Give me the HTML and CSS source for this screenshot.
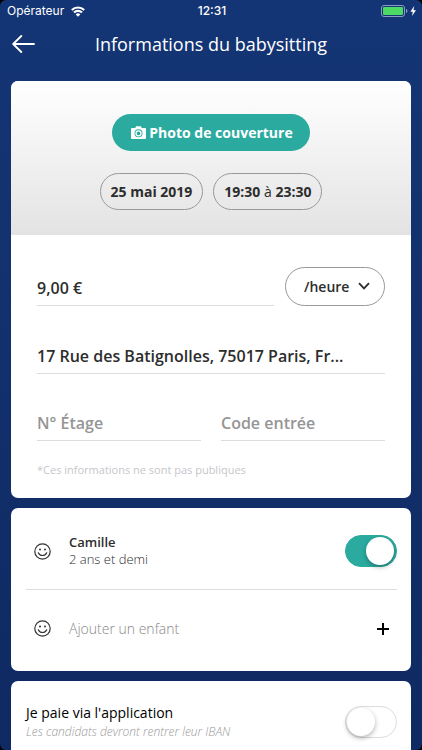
FILE: index.html
```html
<!DOCTYPE html>
<html lang="fr">
<head>
<meta charset="utf-8">
<meta name="viewport" content="width=device-width, initial-scale=1">
<title>Informations du babysitting</title>
<link rel="stylesheet" href="styles.css">
</head>
<body>
<div class="screen">
  <div class="status">
    <div class="carrier">
      <span>Opérateur</span>
      <svg width="14" height="11" viewBox="0 0 14 11" aria-hidden="true">
        <path d="M.8 4a8.800 8.800 0 0 1 12.400 0M3 6.500a5.700 5.700 0 0 1 8 0" fill="none" stroke="#fff" stroke-width="2.100"/>
        <path d="M7 10.800 4.700 8.400a3.300 3.300 0 0 1 4.600 0z" fill="#fff"/>
      </svg>
    </div>
    <time class="clock">12:31</time>
    <div class="power">
      <svg width="36" height="12" viewBox="0 0 36 12" aria-hidden="true">
        <rect x=".5" y=".5" width="23" height="11" rx="2.5" fill="none" stroke="#8c9bc0"/>
        <rect x="2" y="2" width="20" height="8" rx="1.2" fill="#4cd964"/>
        <path d="M25 4v4c.9-.3 1.400-1 1.400-2S25.900 4.300 25 4z" fill="#8c9bc0"/>
        <path d="M33.200 1 29.400 6.700h2.400L31 11l4-5.800h-2.500z" fill="#fff"/>
      </svg>
    </div>
  </div>

  <header class="nav">
    <button class="back" type="button" aria-label="Retour">
      <svg width="24" height="18" viewBox="0 0 24 18" aria-hidden="true">
        <path d="M9.300 1 1.200 9l8.100 8M1.500 9H22" fill="none" stroke="#fff" stroke-width="1.800" stroke-linecap="round" stroke-linejoin="round"/>
      </svg>
    </button>
    <h1>Informations du babysitting</h1>
  </header>

  <main class="cards">
    <section class="card">
      <div class="hero">
        <button class="cover" type="button">
          <svg width="15" height="13" viewBox="0 0 15 13" aria-hidden="true">
            <path fill="#fff" fill-rule="evenodd" d="M1 2h3.200L5.200.3h4.600L10.800 2H14a1 1 0 0 1 1 1v9a1 1 0 0 1-1 1H1a1 1 0 0 1-1-1V3a1 1 0 0 1 1-1zM7.500 3.300a4 4 0 1 0 0 8 4 4 0 0 0 0-8z"/>
            <circle cx="7.500" cy="7.300" r="2.500" fill="none" stroke="#fff" stroke-width="1.300"/>
          </svg>
          <span>Photo de couverture</span>
        </button>
        <div class="slots">
          <button class="pill" type="button">25 mai 2019</button>
          <button class="pill" type="button">19:30 <span class="to">à</span> 23:30</button>
        </div>
      </div>
      <form class="fields">
        <div class="rate">
          <input class="field" type="text" value="9,00 €" aria-label="Tarif">
          <div class="unit">
            <select aria-label="Unité du tarif">
              <option>/heure</option>
            </select>
            <svg class="chevron" width="12" height="8" viewBox="0 0 12 8" aria-hidden="true">
              <path d="M1 1.200 6 6.400l5-5.200" fill="none" stroke="#2d2d2d" stroke-width="1.800"/>
            </svg>
          </div>
        </div>
        <input class="field address" type="text" value="17 Rue des Batignolles, 75017 Paris, Fr..." aria-label="Adresse">
        <div class="access">
          <input class="field" type="text" placeholder="N° Étage" aria-label="N° Étage">
          <input class="field" type="text" placeholder="Code entrée" aria-label="Code entrée">
        </div>
        <p class="note">*Ces informations ne sont pas publiques</p>
      </form>
    </section>

    <section class="card children">
      <div class="child">
        <svg class="face" width="17" height="17" viewBox="0 0 17 17" aria-hidden="true">
          <circle cx="8.500" cy="8.500" r="7.700" fill="none" stroke="#333" stroke-width="1.200"/>
          <circle cx="6" cy="6.600" r="1" fill="#333"/><circle cx="11" cy="6.600" r="1" fill="#333"/>
          <path d="M4.300 9.800c1.400 3.600 7 3.600 8.400 0" fill="none" stroke="#333" stroke-width="1.200" stroke-linecap="round"/>
        </svg>
        <label class="who" for="camille"><strong>Camille</strong><span>2 ans et demi</span></label>
        <input class="switch" type="checkbox" id="camille" checked>
      </div>
      <button class="child add" type="button">
        <svg class="face" width="17" height="17" viewBox="0 0 17 17" aria-hidden="true">
          <circle cx="8.500" cy="8.500" r="7.700" fill="none" stroke="#333" stroke-width="1.200"/>
          <circle cx="6" cy="6.600" r="1" fill="#333"/><circle cx="11" cy="6.600" r="1" fill="#333"/>
          <path d="M4.300 9.800c1.400 3.600 7 3.600 8.400 0" fill="none" stroke="#333" stroke-width="1.200" stroke-linecap="round"/>
        </svg>
        <span class="who">Ajouter un enfant</span>
        <svg class="plus" width="12" height="12" viewBox="0 0 12 12" aria-hidden="true">
          <path d="M6 0v12M0 6h12" stroke="#000" stroke-width="2"/>
        </svg>
      </button>
    </section>

    <section class="card pay">
      <label class="terms" for="pay"><span>Je paie via l'application</span><em>Les candidats devront rentrer leur IBAN</em></label>
      <input class="switch" type="checkbox" id="pay">
    </section>
  </main>
</div>
</body>
</html>
```
FILE: styles.css
```css
* {
  box-sizing: border-box;
}

html {
  background: #000;
}

body {
  margin: 0;
  font-family: "Open Sans", "Noto Sans", sans-serif;
  color: #2d2d2d;
}

button,
input,
select {
  font: inherit;
  color: inherit;
  margin: 0;
}

button {
  border: 0;
  padding: 0;
  background: none;
}

svg {
  display: block;
  flex: none;
}

.screen {
  height: 100vh;
  overflow: hidden;
  border-radius: 6px;
  background: linear-gradient(#143575, #0f2a62);
}

.status {
  display: grid;
  grid-template-columns: 1fr auto 1fr;
  align-items: center;
  height: 22px;
  padding: 0 5px 0 7px;
  font: 500 12px/22px Inter, "Liberation Sans", sans-serif;
  color: #fff;
}

.carrier {
  display: flex;
  align-items: center;
  gap: 7px;
  font-weight: 400;
}

.power {
  justify-self: end;
}

.nav {
  display: grid;
  grid-template-columns: 24px 1fr 24px;
  align-items: center;
  height: 59px;
  padding: 0 12px 16px;
}

.nav h1 {
  margin: 0;
  font-size: 18px;
  line-height: 24px;
  font-weight: 500;
  text-align: center;
  color: #fff;
}

.cards {
  display: grid;
  gap: 10px;
  padding: 0 11px 10px;
}

.card {
  overflow: hidden;
  border-radius: 7px;
  background: #fff;
}

.hero {
  display: flex;
  flex-direction: column;
  align-items: center;
  gap: 22px;
  padding: 33px 10px 25px;
  background: linear-gradient(#fff, #e3e3e3);
}

.cover {
  display: flex;
  align-items: center;
  gap: 3px;
  height: 37px;
  padding: 0 17px 0 19px;
  border-radius: 19px;
  background: #2bab9f;
  font-size: 14px;
  font-weight: 700;
  color: #fff;
}

.slots {
  display: flex;
  gap: 10px;
}

.pill {
  height: 37px;
  padding: 0 10px;
  border: 1px solid #999;
  border-radius: 19px;
  font-size: 14px;
  font-weight: 700;
}

.to {
  font-weight: 400;
}

.fields {
  padding: 32px 26px 19px;
}

.field {
  display: block;
  width: 100%;
  min-width: 0;
  height: 39px;
  padding: 3px 0 0;
  border: 0;
  border-bottom: 1px solid #ddd;
  border-radius: 0;
  background: none;
  font-size: 16px;
  font-weight: 600;
}

.field::placeholder {
  color: #959595;
  opacity: 1;
}

.rate {
  display: grid;
  grid-template-columns: 1fr 100px;
  gap: 11px;
}

.unit {
  position: relative;
}

.unit select {
  appearance: none;
  width: 100%;
  height: 39px;
  padding: 0 18px;
  border: 1px solid #999;
  border-radius: 20px;
  background: none;
  font-size: 14px;
  font-weight: 600;
}

.chevron {
  position: absolute;
  right: 15px;
  top: 15px;
  pointer-events: none;
}

.address {
  margin-top: 29px;
}

.access {
  display: grid;
  grid-template-columns: 1fr 1fr;
  gap: 20px;
  margin-top: 28px;
}

.note {
  margin: 20px 0 0;
  font-size: 11px;
  line-height: 18px;
  color: #c6c6cb;
}

.children {
  padding: 0 14px 0 15px;
}

.child {
  display: flex;
  align-items: center;
  width: 100%;
  height: 81px;
  padding: 5px 0 0 8px;
  text-align: left;
}

.add {
  height: 82px;
  border-top: 1px solid #ddd;
  padding: 0 8px 4px;
}

.who {
  flex: 1;
  margin-left: 18px;
  font-size: 13px;
  line-height: 17px;
  font-weight: 300;
}

.who strong,
.who span,
.terms span,
.terms em {
  display: block;
}

.who strong {
  font-weight: 600;
}

.add .who {
  font-size: 14px;
  color: #888;
}

.switch {
  appearance: none;
  flex: none;
  display: flex;
  width: 52px;
  height: 32px;
  padding: 2px;
  border: 1px solid #ddd;
  border-radius: 16px;
  background: #fff;
}

.switch::before {
  content: "";
  width: 28px;
  height: 28px;
  margin: -1px;
  border-radius: 50%;
  background: #fff;
  box-shadow: 0 2px 5px rgba(0, 0, 0, 0.3);
}

.switch:checked {
  justify-content: flex-end;
  border-color: #2bab9f;
  background: #2bab9f;
}

.switch:checked::before {
  margin: -1px 0;
}

.pay {
  display: flex;
  align-items: center;
  justify-content: space-between;
  height: 82px;
  padding: 0 14px 0 15px;
}

.terms {
  font-size: 14px;
  line-height: 19px;
  color: #000;
}

.terms em {
  font-size: 12px;
  font-weight: 300;
  color: #999;
}
```
